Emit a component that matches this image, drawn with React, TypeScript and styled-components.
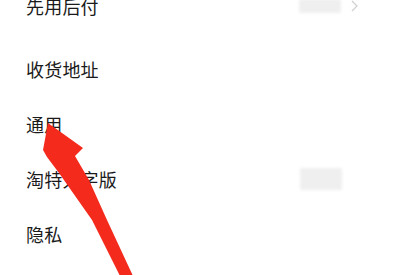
import React from "react";
import styled, { createGlobalStyle } from "styled-components";

const Global = createGlobalStyle`
  html, body {
    margin: 0;
    padding: 0;
    background: #ffffff;
  }
  body {
    font-family: "Noto Sans CJK SC", "Noto Sans", sans-serif;
  }
`;

const Screen = styled.div`
  position: relative;
  width: 400px;
  height: 275px;
  overflow: hidden;
  background: #ffffff;
`;

const Group = styled.div<{ first?: boolean }>`
  display: flex;
  flex-direction: column;
  margin-top: ${props => (props.first ? "-22px" : "8px")};
`;

const Row = styled.div`
  height: 55px;
  display: flex;
  align-items: center;
  padding: 0 42px 0 26px;
`;

const Label = styled.div`
  flex: 1;
  font-size: 18px;
  line-height: 20px;
  color: #1a1a1a;
  letter-spacing: 0.2px;
`;

const Value = styled.div<{ tall?: boolean }>`
  width: 42px;
  height: ${props => (props.tall ? "22px" : "14px")};
  background: #efefef;
  border-radius: 2px;
  filter: blur(1.5px);
  margin-right: ${props => (props.tall ? "16px" : "10px")};
`;

const Chevron = styled.svg`
  width: 7px;
  height: 12px;
  display: block;
`;

const Arrow = styled.svg`
  position: absolute;
  left: 0;
  top: 0;
  width: 400px;
  height: 275px;
  pointer-events: none;
`;

const items = [
  { label: "收货地址" },
  { label: "通用" },
  { label: "淘特大字版", value: true },
  { label: "隐私" },
];

export default function App() {
  return (
    <Screen>
      <Global />
      <Group first>
        <Row>
          <Label>先用后付</Label>
          <Value />
          <Chevron viewBox="0 0 7 12">
            <path d="M1 1 L6 6 L1 11" fill="none" stroke="#cfcfcf" strokeWidth="1.2" />
          </Chevron>
        </Row>
      </Group>
      <Group>
        {items.map(item => (
          <Row key={item.label}>
            <Label>{item.label}</Label>
            {item.value && <Value tall />}
          </Row>
        ))}
      </Group>
      <Arrow viewBox="0 0 400 275">
        <polygon
          points="48,123 83,148 75,156 89,180 107,220 133,276 120,276 92,220 59,173 47,157 43,150"
          fill="#f42a1d"
        />
      </Arrow>
    </Screen>
  );
}
